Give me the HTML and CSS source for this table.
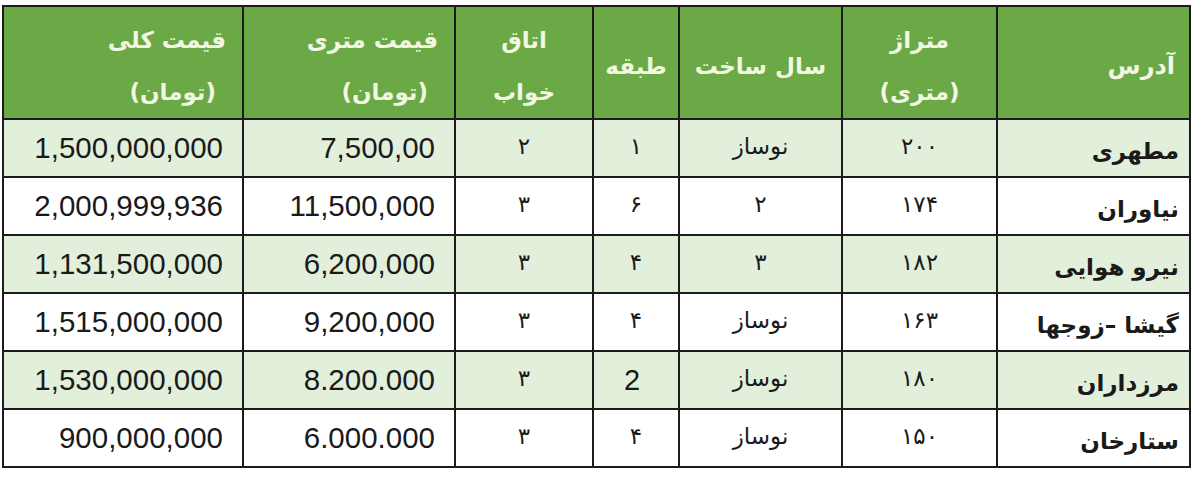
FILE: index.html
```html
<!DOCTYPE html>
<html lang="fa" dir="rtl">
<head>
<meta charset="utf-8">
<title>قیمت آپارتمان</title>
<link rel="stylesheet" href="styles.css">
</head>
<body>
<div class="wrap">
<table class="grid">
  <colgroup>
    <col class="c-addr"><col class="c-area"><col class="c-year"><col class="c-floor"><col class="c-bed"><col class="c-mprice"><col class="c-total">
  </colgroup>
  <thead>
    <tr class="head">
      <th class="h-right"><span class="h-single">آدرس</span></th>
      <th class="h-center">متراژ<br>(متری)</th>
      <th class="h-center">سال ساخت</th>
      <th class="h-center">طبقه</th>
      <th class="h-center">اتاق<br>خواب</th>
      <th class="h-right">قیمت متری<br><span class="h-sub">(تومان)</span></th>
      <th class="h-right">قیمت کلی<br><span class="h-sub">(تومان)</span></th>
    </tr>
  </thead>
  <tbody>
    <tr class="alt">
      <td class="addr">مطهری</td><td class="mid">۲۰۰</td><td class="mid">نوساز</td><td class="mid">۱</td><td class="mid">۲</td><td class="num">7,500,00</td><td class="num">1,500,000,000</td>
    </tr>
    <tr>
      <td class="addr">نیاوران</td><td class="mid">۱۷۴</td><td class="mid">۲</td><td class="mid">۶</td><td class="mid">۳</td><td class="num">11,500,000</td><td class="num">2,000,999,936</td>
    </tr>
    <tr class="alt">
      <td class="addr">نیرو هوایی</td><td class="mid">۱۸۲</td><td class="mid">۳</td><td class="mid">۴</td><td class="mid">۳</td><td class="num">6,200,000</td><td class="num">1,131,500,000</td>
    </tr>
    <tr>
      <td class="addr">گیشا –زوجها</td><td class="mid">۱۶۳</td><td class="mid">نوساز</td><td class="mid">۴</td><td class="mid">۳</td><td class="num">9,200,000</td><td class="num">1,515,000,000</td>
    </tr>
    <tr class="alt">
      <td class="addr">مرزداران</td><td class="mid">۱۸۰</td><td class="mid">نوساز</td><td class="mid latin">2</td><td class="mid">۳</td><td class="num">8.200.000</td><td class="num">1,530,000,000</td>
    </tr>
    <tr>
      <td class="addr">ستارخان</td><td class="mid">۱۵۰</td><td class="mid">نوساز</td><td class="mid">۴</td><td class="mid">۳</td><td class="num">6.000.000</td><td class="num">900,000,000</td>
    </tr>
  </tbody>
</table>
</div>
</body>
</html>
```

FILE: styles.css
```css
html, body {
  margin: 0;
  padding: 0;
  background: #ffffff;
}

body {
  font-family: "DejaVu Sans", "Noto Sans", sans-serif;
  color: #1a1a1a;
}

.wrap {
  padding: 5px 9px 0 4px;
}

.grid {
  border-collapse: collapse;
  table-layout: fixed;
  width: 1187px;
}

.c-addr { width: 193px; }
.c-area { width: 155px; }
.c-year { width: 163px; }
.c-floor { width: 86px; }
.c-bed { width: 138px; }
.c-mprice { width: 212px; }
.c-total { width: 240px; }

.grid th,
.grid td {
  border: 2px solid #1c1c1c;
  padding: 0;
  overflow: hidden;
  white-space: nowrap;
}

.head {
  height: 113px;
}

.head th {
  background: #6aa946;
  color: #f2f7e3;
  font-weight: bold;
  font-size: 23px;
  line-height: 52px;
  vertical-align: middle;
  padding-top: 7px;
}

.h-right {
  text-align: right;
  padding-right: 16px !important;
}

.h-center {
  text-align: center;
}

.h-sub {
  font-weight: bold;
  margin-right: 10px;
}

.h-single {
  margin-right: -2px;
  font-size: 24px;
}

tbody tr {
  height: 58px;
}

tbody tr.alt td {
  background: #e2efda;
}

.addr {
  text-align: right;
  font-weight: bold;
  font-size: 23px;
  padding-right: 10px !important;
  padding-top: 6px !important;
}

.mid {
  text-align: center;
  font-size: 23px;
  padding-bottom: 4px !important;
}

.mid.latin {
  font-family: "Liberation Sans", "Lato", sans-serif;
  font-size: 29px;
  padding-bottom: 0 !important;
  padding-right: 8px !important;
}

.num {
  text-align: right;
  font-family: "Liberation Sans", "Lato", sans-serif;
  font-size: 29.5px;
  padding-right: 19px !important;
  direction: ltr;
}
```
